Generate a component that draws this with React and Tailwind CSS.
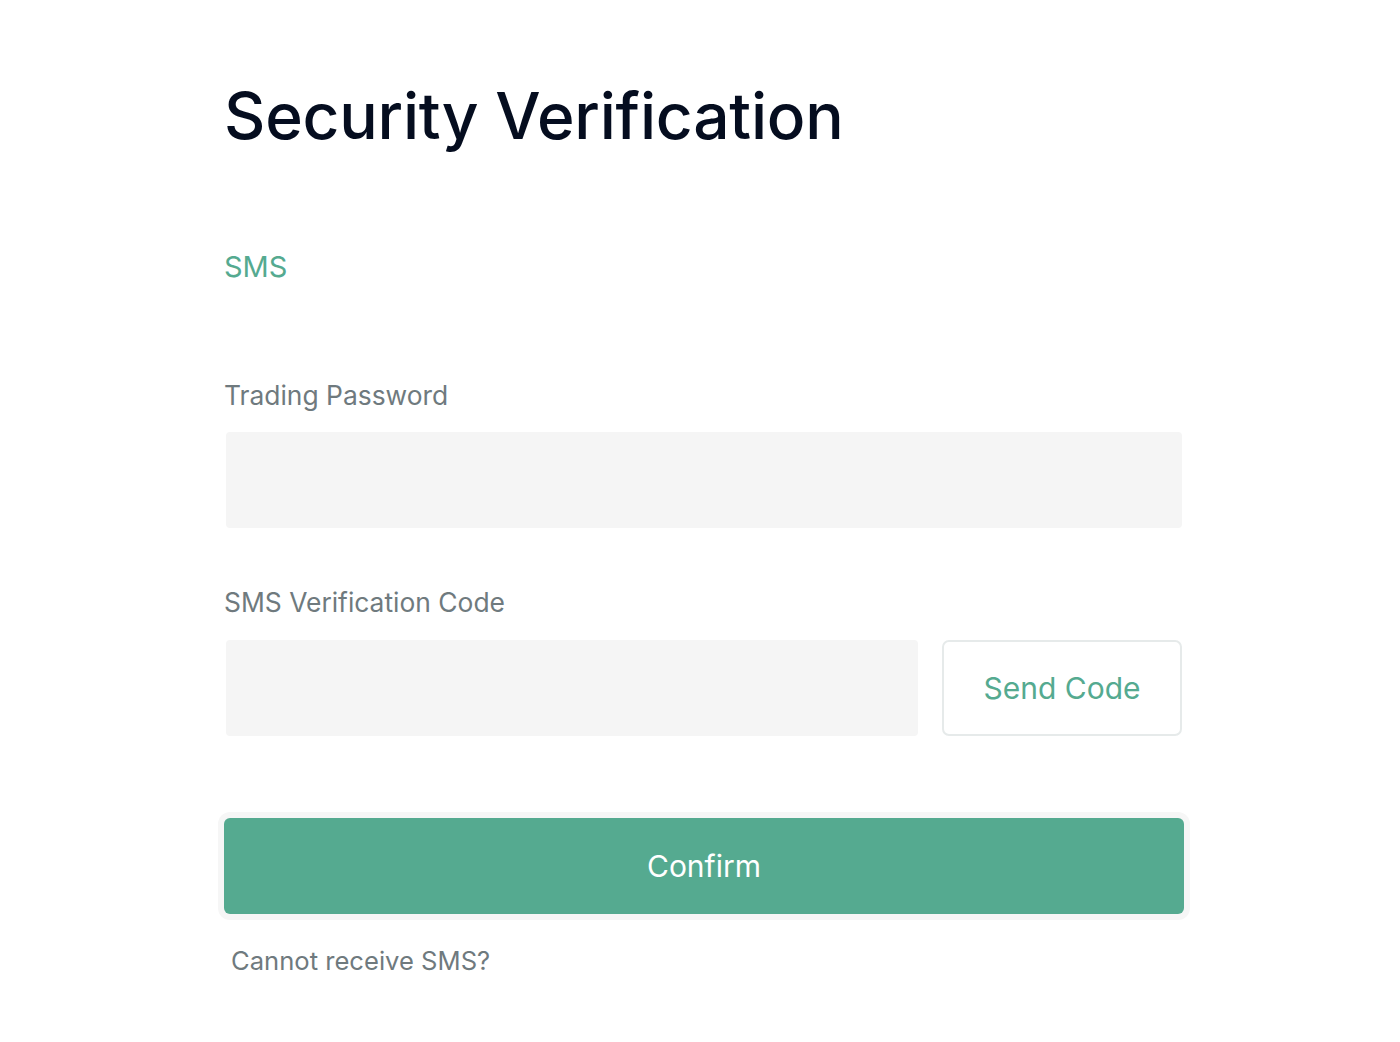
export default function App() {
  return (
    <div className="min-h-[1042px] bg-white" style={{ fontFamily: 'Inter, "Noto Sans", sans-serif' }}>
      <div className="ml-[224px] w-[960px] pt-[78px]">
        <h1 className="text-[64px] leading-[76px] font-medium text-[#050d1f] tracking-[-0.2px]">Security Verification</h1>
        <div className="mt-[93px] text-[29px] leading-[40px] text-[#55aa90]">SMS</div>
        <div className="mt-[90px] text-[26.4px] leading-[36px] text-[#6f7a7e]">Trading Password</div>
        <div className="mt-[19px] mx-[2px] h-[96px] rounded-[4px] bg-[#f5f5f5]" />
        <div className="mt-[56px] text-[26.4px] leading-[36px] text-[#6f7a7e]">SMS Verification Code</div>
        <div className="mt-[20px] mx-[2px] flex gap-[24px]">
          <div className="h-[96px] flex-1 rounded-[4px] bg-[#f5f5f5]" />
          <button className="h-[96px] w-[240px] rounded-[7px] border-2 border-[#e6eaea] bg-white text-[30px] text-[#55aa90]">Send Code</button>
        </div>
        <button className="mt-[82px] h-[96px] w-full rounded-[6px] bg-[#55aa90] text-[30px] text-white shadow-[0_0_0_6px_#f6f6f6]">Confirm</button>
        <div className="mt-[30px] ml-[7px] text-[25.6px] leading-[34px] text-[#6f7a7e]">Cannot receive SMS?</div>
      </div>
    </div>
  );
}
